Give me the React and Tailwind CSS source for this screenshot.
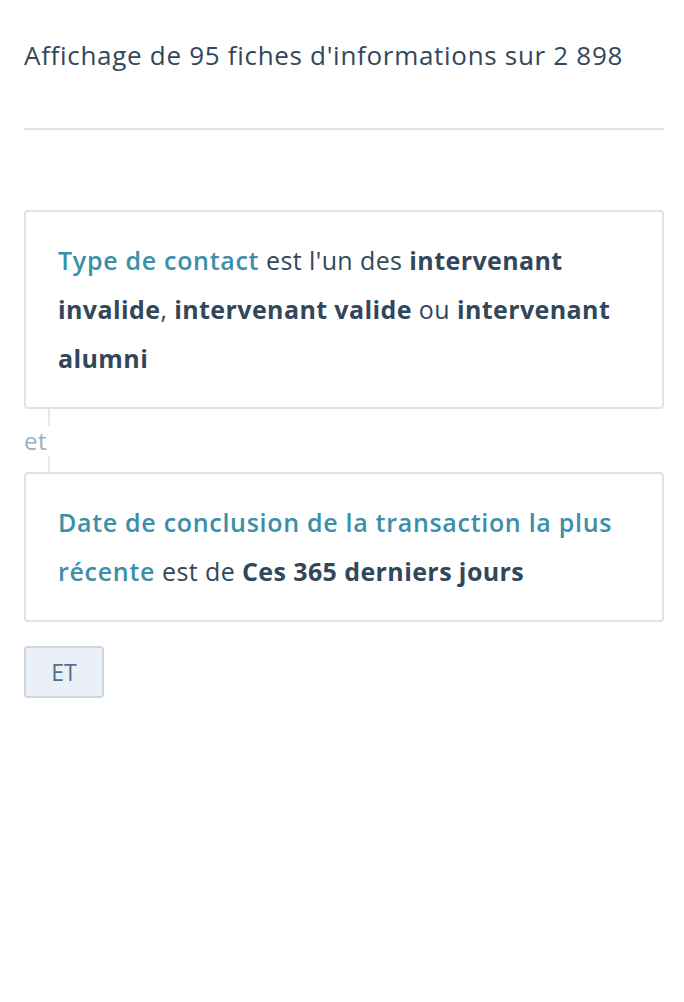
export default function App() {
  const font = { fontFamily: "'Open Sans', 'Noto Sans', sans-serif" };
  return (
    <div className="min-h-screen bg-white pl-6 pr-5 pt-[37px]" style={font}>
      {/* HEADER */}
      <p className="text-[26px] leading-[36px] tracking-[0.7px] text-[#33475b]">
        Affichage de 95 fiches d'informations sur 2 898
      </p>
      <div className="mt-[55px] h-[2px] bg-[#dfe3eb]" />

      {/* FILTER GROUP */}
      <div className="mt-[80px]">
        <div className="rounded-[4px] border-2 border-[#dfe3eb] pl-8 pr-6 pt-6 pb-6 text-[25px] leading-[49px] tracking-[0.4px] text-[#33475b]">
          <span className="font-semibold tracking-[0.7px] text-[#3b8fa8]">Type de contact</span> est l'un des{" "}
          <span className="font-bold">intervenant invalide</span>,{" "}
          <span className="font-bold">intervenant valide</span> ou{" "}
          <span className="font-bold">intervenant alumni</span>
        </div>

        <div className="flex flex-col">
          <div className="ml-6 h-[17px] w-[2px] bg-[#e5e9ef]" />
          <span className="text-[24px] leading-[30px] tracking-[0.5px] text-[#99afc4]">et</span>
          <div className="ml-6 h-[16px] w-[2px] bg-[#e5e9ef]" />
        </div>

        <div className="rounded-[4px] border-2 border-[#dfe3eb] pl-8 pr-6 pt-6 pb-6 text-[25px] leading-[49px] tracking-[0.4px] text-[#33475b]">
          <span className="font-semibold tracking-[0.7px] text-[#3b8fa8]">
            Date de conclusion de la transaction la plus récente
          </span>{" "}
          est de <span className="font-bold">Ces 365 derniers jours</span>
        </div>

        <button className="mt-6 h-[52px] w-[80px] rounded-[4px] border-2 border-[#cbd6e2] bg-[#eaf0f6] text-[23px] text-[#516f90]">
          ET
        </button>
      </div>
    </div>
  );
}
